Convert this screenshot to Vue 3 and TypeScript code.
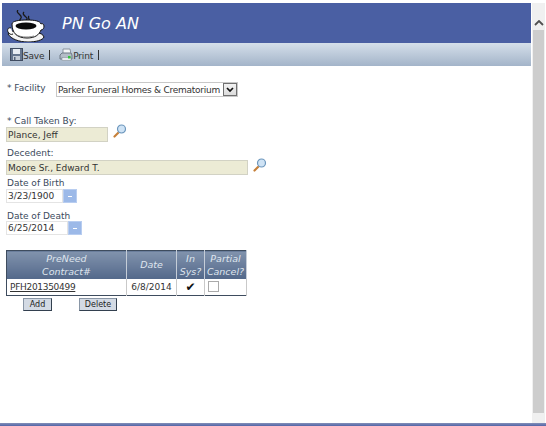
<script setup lang="ts">
import { ref } from 'vue';

const facility = ref('Parker Funeral Homes & Crematorium');
const takenBy = ref('Plance, Jeff');
const decedent = ref('Moore Sr., Edward T.');
const birth = ref('3/23/1900');
const death = ref('6/25/2014');
</script>

<template>
  <div class="window">
    <div class="main">
      <header class="banner">
        <svg class="cup" width="38" height="32" viewBox="0 0 38 32">
          <path d="M11 0c-3 3 5 5 3 8s-3 4 0 7M17 2c-3 3 4 5 3 7s-3 3-1 6M22 6c-2 2 2 4 0 6l-1 3" fill="none" stroke="#1a1a1a" stroke-width="1.3" />
          <path d="M1 24c3 5 11 8 20 8 8 0 15-2 16-5-1-3-4-4-7-4L7 21c-3 0-5 1-6 3z" fill="#f4f4f4" stroke="#111" />
          <path d="M4 18c-3-1-4 2-3 4s3 3 5 2" fill="#fff" stroke="#111" />
          <path d="M5 14c0 9 5 14 15 14 8 0 12-3 14-8 2 0 3-2 3-4s-2-3-3-2c-1-3-6-4-14-4S5 11 5 14z" fill="#fff" stroke="#111" />
          <ellipse cx="19" cy="16" rx="10.5" ry="3.4" fill="#0b0b0b" />
          <path d="M8 24c4 3 12 4 19 2" fill="none" stroke="#666" stroke-width=".8" />
        </svg>
        <span class="title">PN Go AN</span>
      </header>
      <div class="toolbar">
        <button class="tool">
          <svg width="13" height="13" viewBox="0 0 13 13">
            <rect x=".5" y=".5" width="12" height="12" fill="#66768e" stroke="#3f4b60" />
            <rect x="3" y="1" width="7" height="5" fill="#e8edf3" />
            <rect x="3" y="8" width="7" height="4" fill="#c4ccd6" />
            <rect x="4" y="9" width="1.5" height="3" fill="#56647a" />
          </svg>
          <span>Save</span>
        </button>
        <i class="sep"></i>
        <button class="tool print">
          <svg width="14" height="13" viewBox="0 0 14 13">
            <path d="M4 1h7l1 5H4z" fill="#f3f5f7" stroke="#8a94a0" />
            <path d="M1 7l2-2h9l1 2v4H1z" fill="#b4bdc7" stroke="#6f7a86" />
            <rect x="3" y="9.5" width="9" height="3" fill="#e6eaee" stroke="#7d8894" stroke-width=".5" />
            <rect x="9" y="8" width="2.5" height="2.5" fill="#35c43b" />
          </svg>
          <span>Print</span>
        </button>
        <i class="sep"></i>
      </div>

      <form class="form" @submit.prevent>
        <div class="facility">
          <label>* Facility</label>
          <div class="select-wrap">
            <select v-model="facility">
              <option>{{ facility }}</option>
            </select>
            <span class="select-arrow">
              <svg width="8" height="6" viewBox="0 0 8 6">
                <path d="M1 1l3 3 3-3" fill="none" stroke="#111" stroke-width="1.7" />
              </svg>
            </span>
          </div>
        </div>

        <label class="taken-label">* Call Taken By:</label>
        <div class="lookup">
          <input class="readonly taken" v-model="takenBy" />
          <svg class="lens" width="14" height="14" viewBox="0 0 14 14">
            <path d="M5 9L1.5 12.5" stroke="#c6803a" stroke-width="2.2" stroke-linecap="round" />
            <circle cx="8.5" cy="5" r="4" fill="#cfe3f5" stroke="#6d97bd" stroke-width="1.2" />
          </svg>
        </div>

        <label class="decedent-label">Decedent:</label>
        <div class="lookup">
          <input class="readonly decedent" v-model="decedent" />
          <svg class="lens" width="14" height="14" viewBox="0 0 14 14">
            <path d="M5 9L1.5 12.5" stroke="#c6803a" stroke-width="2.2" stroke-linecap="round" />
            <circle cx="8.5" cy="5" r="4" fill="#cfe3f5" stroke="#6d97bd" stroke-width="1.2" />
          </svg>
        </div>

        <label class="date-label">Date of Birth</label>
        <div class="date birth-row">
          <input class="birth" v-model="birth" />
          <span class="drop"></span>
        </div>

        <label class="date-label death-label">Date of Death</label>
        <div class="date">
          <input class="death" v-model="death" />
          <span class="drop"></span>
        </div>

        <table class="grid">
          <thead>
            <tr>
              <th class="c1">PreNeed<br />Contract#</th>
              <th class="c2">Date</th>
              <th class="c3">In<br />Sys?</th>
              <th class="c4">Partial<br />Cancel?</th>
            </tr>
          </thead>
          <tbody>
            <tr>
              <td class="contract"><a href="#">PFH201350499</a></td>
              <td class="center">6/8/2014</td>
              <td class="center check">✔</td>
              <td class="box-cell"><span class="box"></span></td>
            </tr>
          </tbody>
        </table>

        <div class="actions">
          <button class="btn add">Add</button>
          <button class="btn del">Delete</button>
        </div>
      </form>
    </div>

    <aside class="scroll">
      <svg class="arrow" width="10" height="6" viewBox="0 0 10 6">
        <path d="M1 5l4-4 4 4" fill="none" stroke="#505050" stroke-width="1.8" />
      </svg>
      <div class="thumb"></div>
    </aside>
  </div>
  <div class="footline"></div>
</template>

<style>
html,
body {
  margin: 0;
  background: #fff;
  overflow: hidden;
}
</style>

<style scoped>
.window {
  display: flex;
  height: 420px;
  padding: 3px 0 0 2px;
  font-family: "DejaVu Sans", Verdana, sans-serif;
  font-size: 9px;
  color: #333;
}

.main {
  width: 529px;
}

.banner {
  display: flex;
  align-items: center;
  height: 40px;
  background: #4a5fa3;
}

.cup {
  margin-left: 5px;
  margin-top: 5px;
}

.title {
  margin-left: 17px;
  font-size: 16px;
  font-style: italic;
  color: #fff;
}

.toolbar {
  display: flex;
  align-items: center;
  height: 23px;
  padding-left: 8px;
  background: linear-gradient(#d5dfea, #a3b4c9);
}

.tool {
  display: flex;
  align-items: flex-end;
  padding: 0;
  border: 0;
  background: none;
  font: inherit;
  color: #333;
  letter-spacing: -0.2px;
}

.print {
  margin-left: 9px;
}

.sep {
  width: 1px;
  height: 10px;
  margin-left: 5px;
  background: #333;
}

.form {
  padding: 0 0 0 4px;
}

.form label {
  display: block;
  color: #3b4a5c;
}

.facility {
  display: flex;
  align-items: center;
  padding-top: 16px;
}

.facility label {
  width: 50px;
  margin-top: -3px;
  margin-left: 1px;
}

.select-wrap {
  position: relative;
  margin-left: -1px;
}

select {
  display: block;
  width: 182px;
  height: 15px;
  padding: 0 0 0 1px;
  border: 1px solid #c8c8c8;
  background: #fff;
  font: inherit;
  letter-spacing: -0.26px;
  color: #333;
  appearance: none;
}

.select-arrow {
  position: absolute;
  top: 1px;
  right: 1px;
  display: flex;
  align-items: center;
  justify-content: center;
  box-sizing: border-box;
  width: 14px;
  height: 13px;
  border: 1px solid #707070;
  background: linear-gradient(#f2f2f2, #dcdcdc);
}

.taken-label {
  margin-top: 19px;
  margin-left: 1px;
}

.lookup {
  display: flex;
  align-items: flex-start;
}

input {
  box-sizing: border-box;
  margin: 0;
  padding: 0 0 0 1px;
  font: inherit;
  color: #333;
  outline: none;
}

.readonly {
  height: 15px;
  border: 1px solid #d2d2c4;
  background: #ecebd5;
}

.taken {
  width: 102px;
  margin-top: 1px;
}

.decedent {
  width: 242px;
}

.lens {
  margin-left: 5px;
  margin-top: -2px;
}

.decedent-label {
  margin-top: 6px;
  margin-bottom: 2px;
  margin-left: 1px;
}

.date-label {
  margin-top: 3px;
  margin-left: 1px;
}

.death-label {
  margin-top: 8px;
}

.date {
  display: flex;
}

.birth-row {
  margin-top: 1px;
}

.date input {
  height: 14px;
  border: 1px solid #e4e4e4;
  background: #fff;
}

.birth {
  width: 57px;
}

.death {
  width: 62px;
}

.drop {
  position: relative;
  box-sizing: border-box;
  width: 14px;
  height: 14px;
  background: #9cb9e8;
  border: 1px solid #b8cdf0;
}

.drop::after {
  content: "";
  position: absolute;
  left: 4px;
  top: 6px;
  width: 4px;
  height: 1px;
  background: #fff;
}

.grid {
  margin-top: 15px;
  border-collapse: collapse;
  border: 1px solid #3e4c5e;
  table-layout: fixed;
  width: 240px;
}

.grid th {
  box-sizing: border-box;
  height: 28px;
  padding: 0;
  border-right: 1px solid #c5cdd8;
  background: linear-gradient(#8193ad, #53688a);
  font-size: 9.5px;
  font-style: italic;
  font-weight: normal;
  line-height: 13px;
  color: #dfe5ee;
  overflow: hidden;
  white-space: nowrap;
}

.c1 { width: 120px; }
.c2 { width: 50px; }
.c3 { width: 28px; }
.c4 { width: 42px; }

.grid td {
  height: 16px;
  padding: 0;
  border-right: 1px solid #c9c9c9;
  background: #fff;
}

.contract {
  padding-left: 3px !important;
}

.contract a {
  color: #333;
  text-decoration: underline;
  letter-spacing: -0.3px;
}

.center {
  text-align: center;
}

.check {
  font-size: 12px;
  color: #111;
}

.box-cell {
  padding-left: 3px !important;
}

.box {
  display: block;
  box-sizing: border-box;
  width: 11px;
  height: 11px;
  border: 1px solid #aaa;
  background: #fff;
}

.actions {
  display: flex;
  margin-top: 2px;
  padding-left: 17px;
}

.btn {
  box-sizing: border-box;
  height: 13px;
  padding: 0;
  border: 1px solid #33404f;
  border-top-color: #8996a6;
  border-left-color: #8996a6;
  background: #d3dae4;
  font-family: inherit;
  font-size: 8px;
  color: #222;
}

.add {
  width: 29px;
}

.del {
  width: 38px;
  margin-left: 27px;
}

.scroll {
  position: relative;
  width: 13px;
  margin-left: 1px;
  background: #f0f0f0;
}

.arrow {
  display: block;
  margin: 17px auto 4px;
}

.thumb {
  width: 11px;
  height: 383px;
  margin-left: 1px;
  background: #cdcdcd;
}

.footline {
  height: 3px;
  background: linear-gradient(#8490b8, #5164a8);
}
</style>
